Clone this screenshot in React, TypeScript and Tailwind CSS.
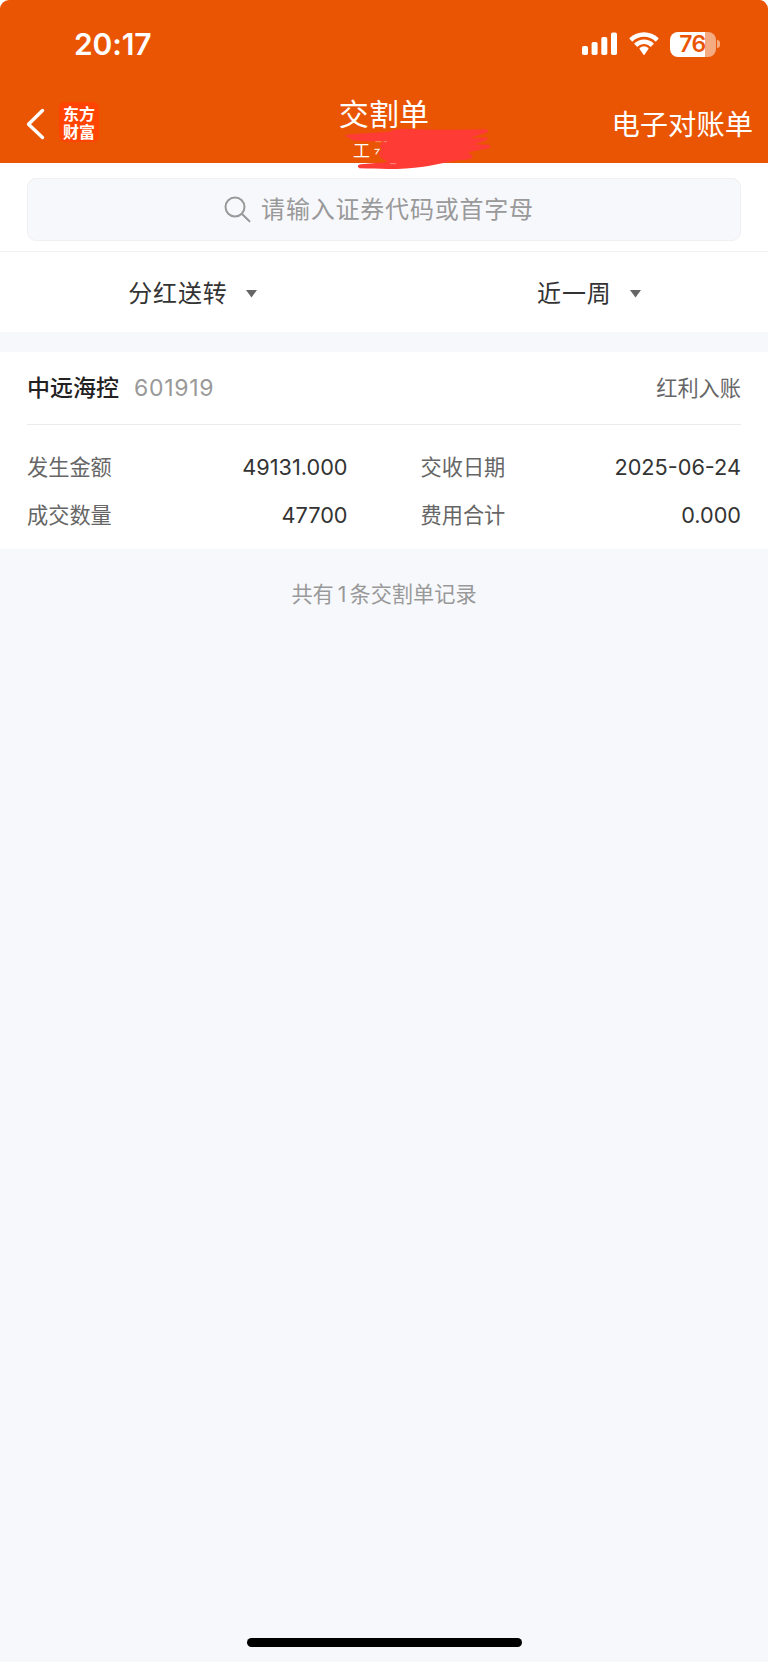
type Field = { label: string; value: string }

const leftFields: Field[] = [
	{ label: '发生金额', value: '49131.000' },
	{ label: '成交数量', value: '47700' },
]

const rightFields: Field[] = [
	{ label: '交收日期', value: '2025-06-24' },
	{ label: '费用合计', value: '0.000' },
]

function StatusBar() {
	return (
		<div className="flex h-[88px] items-center justify-between pl-[74px] pr-[49px]">
			<span className="text-[30px] leading-none font-semibold tracking-[-0.1px]">20:17</span>
			<div className="flex items-center">
				<svg width="36" height="24" viewBox="0 0 36 24" fill="#fff">
					<rect x="0" y="14" width="6" height="9" rx="1.8" />
					<rect x="9.6" y="10" width="6" height="13" rx="1.8" />
					<rect x="19.3" y="5" width="6" height="18" rx="1.8" />
					<rect x="29" y="0.5" width="6" height="22.5" rx="1.8" />
				</svg>
				<svg className="ml-[10px]" width="32" height="24" viewBox="0 0 32 24" fill="#fff">
					<path d="M16 4.7c4.3 0 8.3 1.7 11.2 4.5.3.3.7.3 1 0l2.2-2.2c.3-.3.3-.7 0-1C26.5 2.3 21.5 .2 16 .2S5.5 2.3 1.6 6c-.3.3-.3.7 0 1l2.2 2.2c.3.3.7.3 1 0C7.7 6.4 11.7 4.7 16 4.7z" />
					<path d="M16 12c2.4 0 4.6.9 6.2 2.4.3.3.7.3 1 0l2.200-2.200c.3-.3.3-.8 0-1.100A13.700 13.700 0 0 0 16 7.400c-3.600 0-6.900 1.400-9.400 3.700-.3.300-.3.800 0 1.100l2.200 2.200c.3.300.7.300 1 0C11.400 12.900 13.600 12 16 12z" />
					<path d="M20.400 17c.3-.3.3-.7 0-1a6.700 6.700 0 0 0-8.800 0c-.3.300-.3.700 0 1l3.900 5.700c.3.300.7.300 1 0z" />
				</svg>
				<div className="ml-[10px] flex h-[25px] w-[46px] items-center justify-center rounded-[8px] bg-[linear-gradient(90deg,#fff_76%,#f5ab82_76%)] pt-px pr-[1px]">
					<span className="text-[23px] leading-none font-semibold tracking-[-0.6px] text-[#ea5504]">76</span>
				</div>
				<div className="-mr-px ml-[1px] h-2 w-[3px] rounded-r-full bg-[#f5ab82]" />
			</div>
		</div>
	)
}

function Header() {
	return (
		<header className="relative h-[163px] rounded-t-[9px] bg-[#ea5504] text-white">
			<StatusBar />
			<div className="grid h-[75px] grid-cols-[1fr_auto_1fr]">
				<div className="flex items-start pt-[14px] pl-[26px]">
					<svg className="mt-[6px]" width="19" height="32" viewBox="0 0 19 32" fill="none" stroke="#fff" strokeWidth="3.4" strokeLinecap="round" strokeLinejoin="round">
						<path d="M16.5 2.500L2.500 16.300L16.500 29.500" />
					</svg>
					<div className="ml-[14px] flex h-[40px] w-[40px] flex-col items-center justify-center rounded-[6px] bg-[#ff4300] pt-[2px] text-[16px] leading-[18px] font-bold">
						<span>东方</span>
						<span>财富</span>
					</div>
				</div>
				<div className="flex flex-col items-center pt-[5px]">
					<h1 className="text-[30px] leading-[42px] tracking-[0.2px]">交割单</h1>
					<span className="mt-[4px] mr-[45px] text-[17px] leading-[24px]">工</span>
				</div>
				<div className="pt-[19px] pr-[15px] text-right text-[28.3px] leading-[36px]">电子对账单</div>
			</div>
			{/* hand-drawn marker over the account name */}
			<svg className="absolute top-[80px] left-[310px]" width="220" height="100" viewBox="0 0 660 300">
				<path
					d="M104 166C125 160 230 157 244 153C250 148 265 146 285 146C360 151 460 149 525 148C538 149 538 156 526 160L480 173L530 172C538 176 528 182 516 186L490 193L538 194C546 199 538 206 525 207L475 216L488 229C492 235 480 238 465 239C420 242 380 254 340 260C280 269 220 267 148 265C141 260 143 254 152 253L235 246C220 239 205 230 207 218L216 207C207 200 207 193 221 184C190 183 150 185 124 180C126 175 112 174 104 166Z"
					fill="#ff3b35"
				/>
				<path d="M193 208H207L197 223" fill="none" stroke="#fde0d4" strokeWidth="4" />
				<path d="M196 185H214M221 185H231M240 251H258" stroke="#f9b09c" strokeWidth="2" />
			</svg>
		</header>
	)
}

function SearchBox() {
	return (
		<div className="h-[89px] border-b border-[#f0f0f2] bg-white px-[27px] pt-[15px]">
			<div className="flex h-[63px] items-center justify-center rounded-[9px] border border-[#f0f0f2] bg-[#f7f8fc] pr-[10px] text-[#999]">
				<svg width="27" height="27" viewBox="0 0 27 27" fill="none" stroke="#999" strokeWidth="2" strokeLinecap="round">
					<circle cx="11" cy="11" r="9.5" />
					<path d="M18 18L25.5 25.3" />
				</svg>
				<span className="ml-[10px] text-[24px] tracking-[0.8px]">请输入证券代码或首字母</span>
			</div>
		</div>
	)
}

function Filter({ text }: { text: string }) {
	return (
		<button className="flex w-[129px] items-center justify-end pt-[4px] text-[24px] tracking-[0.8px] text-[#333]">
			{text}
			<svg className="ml-[18px]" width="11" height="8" viewBox="0 0 11 8" fill="#666">
				<path d="M0 0H11L5.5 7.5Z" />
			</svg>
		</button>
	)
}

function FieldColumn({ fields }: { fields: Field[] }) {
	return (
		<div className="flex flex-1 flex-col gap-[18px]">
			{fields.map((field) => (
				<div key={field.label} className="flex h-[30.5px] items-center justify-between">
					<span className="pt-px text-[21.2px] text-[#666]">{field.label}</span>
					<span className="text-[21.7px] text-[#333]">{field.value}</span>
				</div>
			))}
		</div>
	)
}

export default function App() {
	return (
		<div className="bg-white">
			<div className="flex h-[1662px] w-[768px] flex-col rounded-t-[9px] bg-[#f7f8fc] font-['Inter','Noto_Sans_CJK_SC',sans-serif]">
				<Header />
				<SearchBox />
				<div className="flex h-[80px] justify-around bg-white">
					<Filter text="分红送转" />
					<Filter text="近一周" />
				</div>
				<section className="mt-[20px] h-[197px] bg-white px-[27px]">
					<div className="flex h-[73px] items-center border-b border-[#ebebed]">
						<h2 className="pt-px text-[23px] font-medium text-[#222]">中远海控</h2>
						<span className="ml-[15px] pt-px text-[23px] tracking-[0.7px] text-[#999]">601919</span>
						<span className="ml-auto pt-px text-[21.2px] text-[#666]">红利入账</span>
					</div>
					<div className="flex gap-[73px] pt-[27px]">
						<FieldColumn fields={leftFields} />
						<FieldColumn fields={rightFields} />
					</div>
				</section>
				<p className="mt-[29px] text-center text-[21.2px] leading-[32px] text-[#999]">
					共有<span className="mr-[3px] ml-[4px]">1</span>条交割单记录
				</p>
				<div className="mx-auto mt-auto mb-[15px] h-[9px] w-[275px] rounded-full bg-black" />
			</div>
		</div>
	)
}
